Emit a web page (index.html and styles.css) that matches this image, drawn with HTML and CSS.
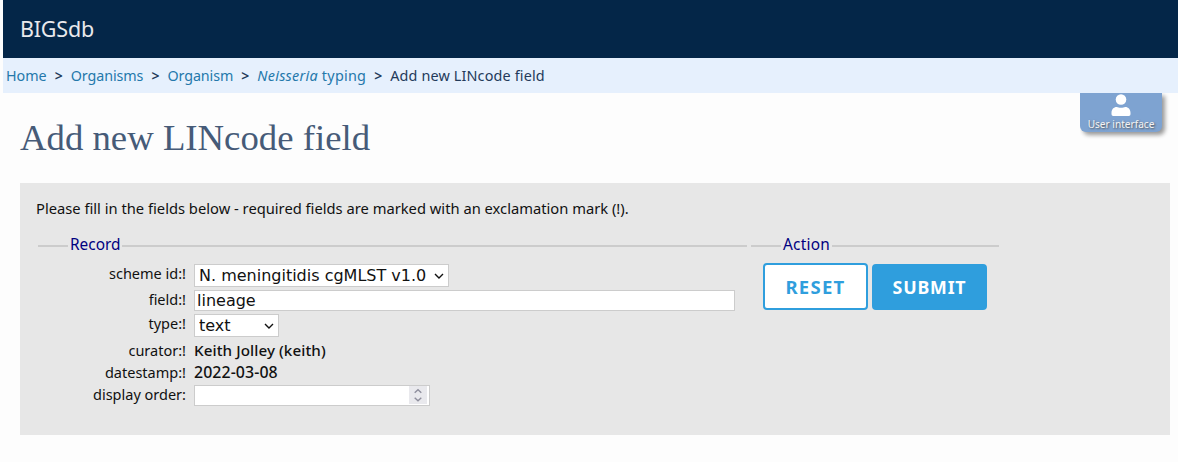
FILE: index.html
```
<!DOCTYPE html>
<html lang="en">
<head>
<meta charset="utf-8">
<title>Add new LINcode field - BIGSdb</title>
<link rel="stylesheet" href="styles.css">
</head>
<body>
<header class="masthead"><span class="brand">BIGSdb</span></header>
<nav class="crumbs">
  <a class="c-home" href="#">Home</a><b>&gt;</b>
  <a class="c-orgs" href="#">Organisms</a><b>&gt;</b>
  <a class="c-org" href="#">Organism</a><b>&gt;</b>
  <a class="c-typing" href="#"><i>Neisseria</i> typing</a><b>&gt;</b>
  <span class="current">Add new LINcode field</span>
</nav>
<a class="user-tab" href="#">
  <svg viewBox="0 0 20 22" width="20" height="22"><circle cx="10" cy="5.500" r="5.300" fill="#fff"/><path d="M.5 20.300v-1.500c0-3.600 2.200-5.900 5.200-5.900 1.300 0 2.300.9 4.300.9s3-.9 4.300-.9c3 0 5.200 2.300 5.200 5.900v1.500q0 1.700-1.700 1.700H2.200q-1.700 0-1.700-1.700z" fill="#fff"/></svg>
  <span>User interface</span>
</a>
<main>
  <h1>Add new LINcode field</h1>
  <form class="panel">
    <p class="intro">Please fill in the fields below - required fields are marked with an exclamation mark (!).</p>
    <div class="sets">
      <section class="record">
        <h2 class="legend">Record</h2>
        <div class="rows">
          <label for="scheme">scheme id:!</label>
          <div class="pick pick-scheme"><select id="scheme"><option>N. meningitidis cgMLST v1.0</option></select><svg viewBox="0 0 10 6" width="10" height="6"><path d="M1 1l4 4 4-4"/></svg></div>
          <label for="field">field:!</label>
          <input class="text" id="field" value="lineage">
          <label for="type">type:!</label>
          <div class="pick pick-type"><select id="type"><option>text</option></select><svg viewBox="0 0 10 6" width="10" height="6"><path d="M1 1l4 4 4-4"/></svg></div>
          <span class="label">curator:!</span><strong>Keith Jolley (keith)</strong>
          <span class="label">datestamp:!</span><strong class="date">2022-03-08</strong>
          <label class="order" for="order">display order:</label>
          <div class="number"><input id="order"><span class="spin"><svg viewBox="0 0 18 18" width="18" height="18"><path d="M5.700 6.700L9 3.700l3.300 3M5.700 11.700l3.300 3 3.300-3"/></svg></span></div>
        </div>
      </section>
      <section class="action">
        <h2 class="legend">Action</h2>
        <div class="buttons"><button class="reset" type="reset">RESET</button><button class="submit" type="button">SUBMIT</button></div>
      </section>
    </div>
  </form>
</main>
</body>
</html>
```
FILE: styles.css
```
* { box-sizing: border-box; }
body { margin: 0 0 0 3px; height: 462px; overflow: hidden; background: #fdfdfd; color: #111; font: 14.73px/22px "Noto Sans", sans-serif; }
a { color: #2478ab; text-decoration: none; }
.masthead { display: flex; align-items: center; height: 58px; padding-left: 17px; background: #042648; }
.brand { color: #e9e9ec; font-size: 21.500px; letter-spacing: -.2px; }
.crumbs { display: flex; align-items: center; height: 35px; padding-left: 3px; background: #e6f0fd; color: #233a5a; font-size: 14.300px; white-space: nowrap; }
.crumbs b { width: 24px; text-align: center; font-weight: 600; font-size: 14px; }
.c-orgs, .c-org { letter-spacing: -.07px; }
.c-typing { font-size: 14.400px; letter-spacing: .25px; }
.current { font-size: 14.400px; letter-spacing: .15px; }
.user-tab { position: absolute; top: 93px; left: 1080px; width: 82px; height: 39px; border-radius: 0 0 6px 6px; background: #7ea3d1; box-shadow: 3px 3px 4px #999; clip-path: inset(0 -10px -10px 0); display: flex; flex-direction: column; align-items: center; padding-top: 1px; }
.user-tab span { margin-top: 2px; color: #f4f4f4; font-size: 10.100px; line-height: 13px; text-shadow: 1px 1px 2px #555; white-space: nowrap; }
main { padding: 23px 8px 0 17px; }
h1 { margin: 0; height: 67px; color: #465b78; font: 36.750px/44px "Liberation Serif", serif; }
.panel { height: 252px; padding: 14px 16px 0 16px; background: #e7e7e7; }
.intro { margin: 0; }
.sets { display: flex; gap: 4px; padding: 15px 0 0 2px; }
.record { width: 709px; }
.action { width: 248px; }
.legend { display: flex; align-items: center; gap: 2px; margin: 0; height: 22px; color: #000080; font-size: 15.400px; font-weight: 400; }
.legend::before, .legend::after { content: ""; height: 2px; margin-top: 2px; background: #ccc; }
.legend::before { width: 30px; }
.legend::after { flex: 1; }
.action .legend { letter-spacing: .25px; }
.rows { display: grid; grid-template: 26px 24px 25px 22px 23px 21px / 148px 541px; column-gap: 8px; padding-top: 8px; }
.rows label { height: 20px; line-height: 18px; text-align: right; font-size: 14.500px; }
.rows .order { line-height: 20px; }
.label { line-height: 22px; text-align: right; font-size: 14.500px; }
strong { font-weight: 500; font-size: 15.200px; line-height: 22px; letter-spacing: .08px; }
.date { font-size: 15.900px; }
.pick { position: relative; height: 23px; }
.pick-scheme { width: 255px; }
.pick-type { width: 85px; }
.pick svg { position: absolute; right: 5px; top: 9px; fill: none; stroke: #111; stroke-width: 1.400; }
select, input { appearance: none; width: 100%; height: 100%; margin: 0; border: 1px solid #ccc; border-radius: 0; background: #fff; color: #111; font: 16px "DejaVu Sans", sans-serif; outline: 0; }
select { padding: 0 0 0 4px; }
input.text { height: 21px; padding: 0 2px; }
.number { position: relative; width: 236px; height: 21px; }
.spin { position: absolute; right: 3px; top: 2px; width: 18px; height: 18px; background: #e9e9ed; }
.spin svg { display: block; fill: none; stroke: #8f8f9d; stroke-width: 1.400; }
.buttons { display: flex; align-items: flex-end; gap: 4px; padding: 7px 0 0 12px; }
button { margin: 0; padding: 0; border: 2px solid #2f9edd; border-radius: 4px; font: 700 18.500px/24px "Noto Sans", sans-serif; letter-spacing: 1.300px; }
.reset { width: 105px; height: 47px; background: #fff; color: #2f9edd; }
.submit { width: 115px; height: 46px; background: #2f9edd; color: #fff; font-size: 17.800px; letter-spacing: .8px; }
```
